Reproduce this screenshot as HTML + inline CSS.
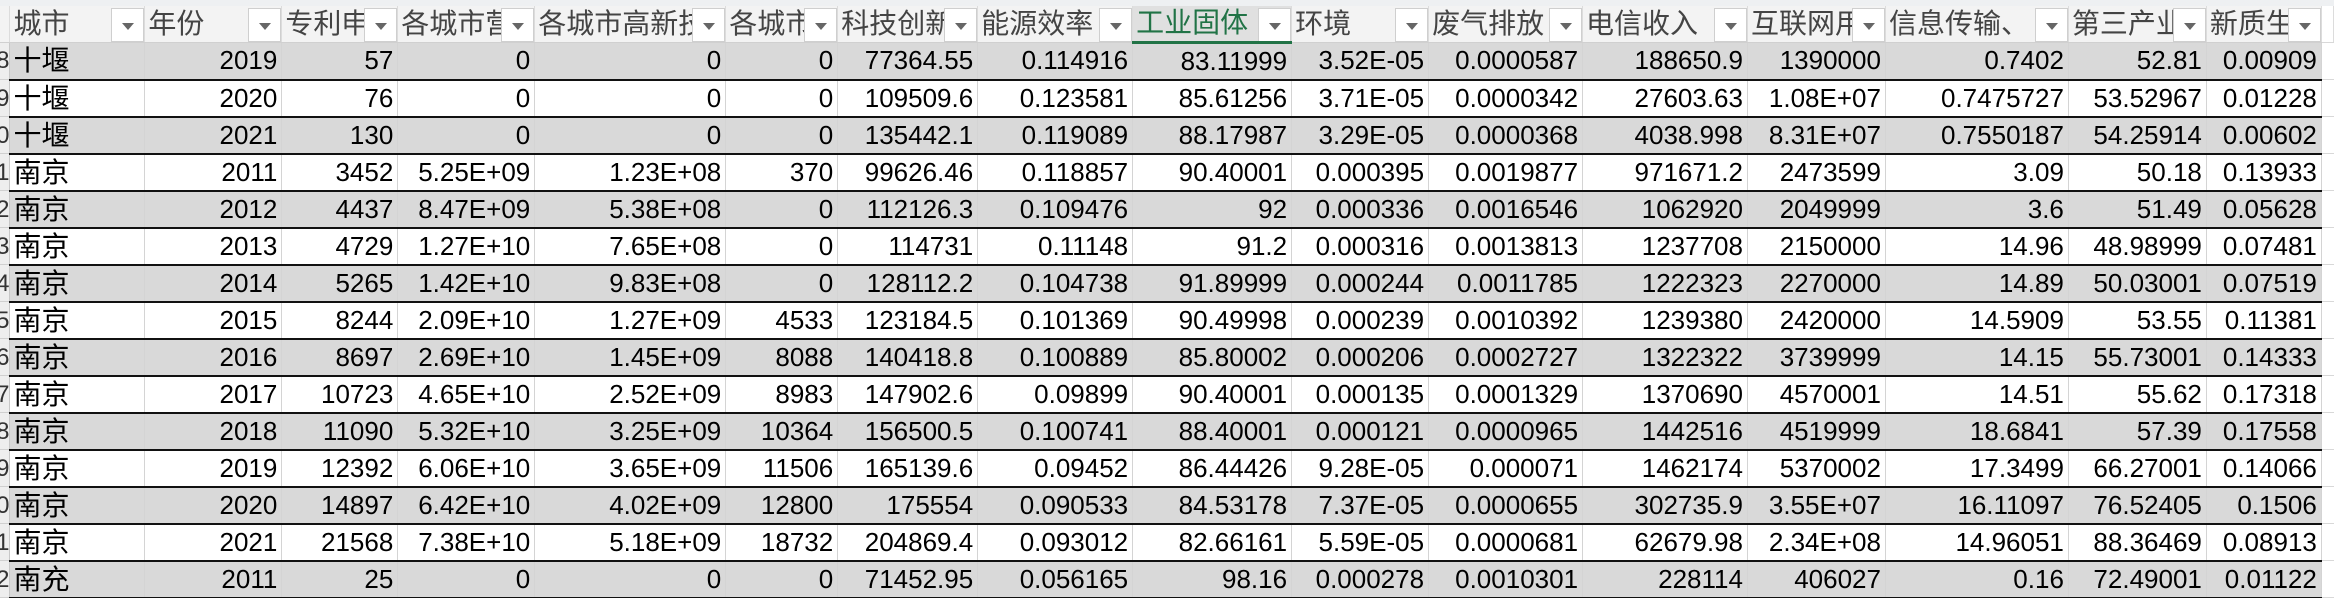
<!DOCTYPE html>
<html><head><meta charset="utf-8">
<style>
html,body{margin:0;padding:0;background:#fff;width:2334px;height:598px;overflow:hidden}
body{position:relative;font-family:"Liberation Sans","Noto Sans CJK SC",sans-serif;font-size:26px;color:#000}
.top{position:absolute;left:0;top:0;width:2334px;height:6px;background:#eef0f2}
table{position:absolute;left:0;top:6px;border-collapse:collapse;table-layout:fixed}
td{padding:0 4px;white-space:nowrap;overflow:hidden;text-align:right;border-right:1px solid #d4d4d4;border-bottom:2px solid #111;height:35px;line-height:35px;box-sizing:border-box}
td.c{text-align:left;font-size:28px;padding-left:3px}
td.rn{padding:0;background:#eee;color:#333;text-align:right;border-right:1px solid #c8c8c8;border-bottom:1px solid #d0d0d0;font-size:24px;text-indent:-8px}
tr.h td{height:36px;background:#f3f3f3;color:#444;text-align:left;border-bottom:1px solid #d0d0d0;position:relative;border-right:1px solid #dcdcdc;line-height:34px;font-size:28px;padding-left:3px}
tr.h td.sel{background:#e0e0e0;color:#217346;border-bottom:3px solid #217346}
tr.g td{background:#d9d9d9}
tr.g td.rn,tr.w td.rn{background:#eee}
.f{position:absolute;right:0;top:2px;width:33px;height:34px;background:#fff;border:1px solid #cfcfcf;box-sizing:border-box;z-index:2}
.f:after{content:"";position:absolute;left:10px;top:14px;border-left:6px solid transparent;border-right:6px solid transparent;border-top:7px solid #666}
td.x{border-right:none;background:#fff!important;border-bottom:1px solid #d8d8d8}
tr.h td.x{background:#fff!important;border-bottom:1px solid #d8d8d8}
</style></head><body>
<div class="top"></div>
<table>
<colgroup><col style="width:10px"><col style="width:135px"><col style="width:137px"><col style="width:116px"><col style="width:137px"><col style="width:191px"><col style="width:112px"><col style="width:140px"><col style="width:155px"><col style="width:159px"><col style="width:137px"><col style="width:154px"><col style="width:165px"><col style="width:138px"><col style="width:183px"><col style="width:138px"><col style="width:115px"><col style="width:12px"></colgroup>
<tr class="h"><td class="rn"></td><td>城市<span class="f"></span></td><td>年份<span class="f"></span></td><td>专利申<span class="f"></span></td><td>各城市营<span class="f"></span></td><td>各城市高新技<span class="f"></span></td><td>各城市<span class="f"></span></td><td>科技创新<span class="f"></span></td><td>能源效率<span class="f"></span></td><td class="sel">工业固体<span class="f"></span></td><td>环境<span class="f"></span></td><td>废气排放<span class="f"></span></td><td>电信收入<span class="f"></span></td><td>互联网用<span class="f"></span></td><td>信息传输、<span class="f"></span></td><td>第三产业<span class="f"></span></td><td>新质生<span class="f"></span></td><td class="x"></td></tr>
<tr class="g"><td class="rn">8</td><td class="c">十堰</td><td>2019</td><td>57</td><td>0</td><td>0</td><td>0</td><td>77364.55</td><td>0.114916</td><td>83.11999</td><td>3.52E-05</td><td>0.0000587</td><td>188650.9</td><td>1390000</td><td>0.7402</td><td>52.81</td><td>0.00909</td><td class="x"></td></tr>
<tr class="w"><td class="rn">9</td><td class="c">十堰</td><td>2020</td><td>76</td><td>0</td><td>0</td><td>0</td><td>109509.6</td><td>0.123581</td><td>85.61256</td><td>3.71E-05</td><td>0.0000342</td><td>27603.63</td><td>1.08E+07</td><td>0.7475727</td><td>53.52967</td><td>0.01228</td><td class="x"></td></tr>
<tr class="g"><td class="rn">0</td><td class="c">十堰</td><td>2021</td><td>130</td><td>0</td><td>0</td><td>0</td><td>135442.1</td><td>0.119089</td><td>88.17987</td><td>3.29E-05</td><td>0.0000368</td><td>4038.998</td><td>8.31E+07</td><td>0.7550187</td><td>54.25914</td><td>0.00602</td><td class="x"></td></tr>
<tr class="w"><td class="rn">1</td><td class="c">南京</td><td>2011</td><td>3452</td><td>5.25E+09</td><td>1.23E+08</td><td>370</td><td>99626.46</td><td>0.118857</td><td>90.40001</td><td>0.000395</td><td>0.0019877</td><td>971671.2</td><td>2473599</td><td>3.09</td><td>50.18</td><td>0.13933</td><td class="x"></td></tr>
<tr class="g"><td class="rn">2</td><td class="c">南京</td><td>2012</td><td>4437</td><td>8.47E+09</td><td>5.38E+08</td><td>0</td><td>112126.3</td><td>0.109476</td><td>92</td><td>0.000336</td><td>0.0016546</td><td>1062920</td><td>2049999</td><td>3.6</td><td>51.49</td><td>0.05628</td><td class="x"></td></tr>
<tr class="w"><td class="rn">3</td><td class="c">南京</td><td>2013</td><td>4729</td><td>1.27E+10</td><td>7.65E+08</td><td>0</td><td>114731</td><td>0.11148</td><td>91.2</td><td>0.000316</td><td>0.0013813</td><td>1237708</td><td>2150000</td><td>14.96</td><td>48.98999</td><td>0.07481</td><td class="x"></td></tr>
<tr class="g"><td class="rn">4</td><td class="c">南京</td><td>2014</td><td>5265</td><td>1.42E+10</td><td>9.83E+08</td><td>0</td><td>128112.2</td><td>0.104738</td><td>91.89999</td><td>0.000244</td><td>0.0011785</td><td>1222323</td><td>2270000</td><td>14.89</td><td>50.03001</td><td>0.07519</td><td class="x"></td></tr>
<tr class="w"><td class="rn">5</td><td class="c">南京</td><td>2015</td><td>8244</td><td>2.09E+10</td><td>1.27E+09</td><td>4533</td><td>123184.5</td><td>0.101369</td><td>90.49998</td><td>0.000239</td><td>0.0010392</td><td>1239380</td><td>2420000</td><td>14.5909</td><td>53.55</td><td>0.11381</td><td class="x"></td></tr>
<tr class="g"><td class="rn">6</td><td class="c">南京</td><td>2016</td><td>8697</td><td>2.69E+10</td><td>1.45E+09</td><td>8088</td><td>140418.8</td><td>0.100889</td><td>85.80002</td><td>0.000206</td><td>0.0002727</td><td>1322322</td><td>3739999</td><td>14.15</td><td>55.73001</td><td>0.14333</td><td class="x"></td></tr>
<tr class="w"><td class="rn">7</td><td class="c">南京</td><td>2017</td><td>10723</td><td>4.65E+10</td><td>2.52E+09</td><td>8983</td><td>147902.6</td><td>0.09899</td><td>90.40001</td><td>0.000135</td><td>0.0001329</td><td>1370690</td><td>4570001</td><td>14.51</td><td>55.62</td><td>0.17318</td><td class="x"></td></tr>
<tr class="g"><td class="rn">8</td><td class="c">南京</td><td>2018</td><td>11090</td><td>5.32E+10</td><td>3.25E+09</td><td>10364</td><td>156500.5</td><td>0.100741</td><td>88.40001</td><td>0.000121</td><td>0.0000965</td><td>1442516</td><td>4519999</td><td>18.6841</td><td>57.39</td><td>0.17558</td><td class="x"></td></tr>
<tr class="w"><td class="rn">9</td><td class="c">南京</td><td>2019</td><td>12392</td><td>6.06E+10</td><td>3.65E+09</td><td>11506</td><td>165139.6</td><td>0.09452</td><td>86.44426</td><td>9.28E-05</td><td>0.000071</td><td>1462174</td><td>5370002</td><td>17.3499</td><td>66.27001</td><td>0.14066</td><td class="x"></td></tr>
<tr class="g"><td class="rn">0</td><td class="c">南京</td><td>2020</td><td>14897</td><td>6.42E+10</td><td>4.02E+09</td><td>12800</td><td>175554</td><td>0.090533</td><td>84.53178</td><td>7.37E-05</td><td>0.0000655</td><td>302735.9</td><td>3.55E+07</td><td>16.11097</td><td>76.52405</td><td>0.1506</td><td class="x"></td></tr>
<tr class="w"><td class="rn">1</td><td class="c">南京</td><td>2021</td><td>21568</td><td>7.38E+10</td><td>5.18E+09</td><td>18732</td><td>204869.4</td><td>0.093012</td><td>82.66161</td><td>5.59E-05</td><td>0.0000681</td><td>62679.98</td><td>2.34E+08</td><td>14.96051</td><td>88.36469</td><td>0.08913</td><td class="x"></td></tr>
<tr class="g"><td class="rn">2</td><td class="c">南充</td><td>2011</td><td>25</td><td>0</td><td>0</td><td>0</td><td>71452.95</td><td>0.056165</td><td>98.16</td><td>0.000278</td><td>0.0010301</td><td>228114</td><td>406027</td><td>0.16</td><td>72.49001</td><td>0.01122</td><td class="x"></td></tr>
</table>
</body></html>
